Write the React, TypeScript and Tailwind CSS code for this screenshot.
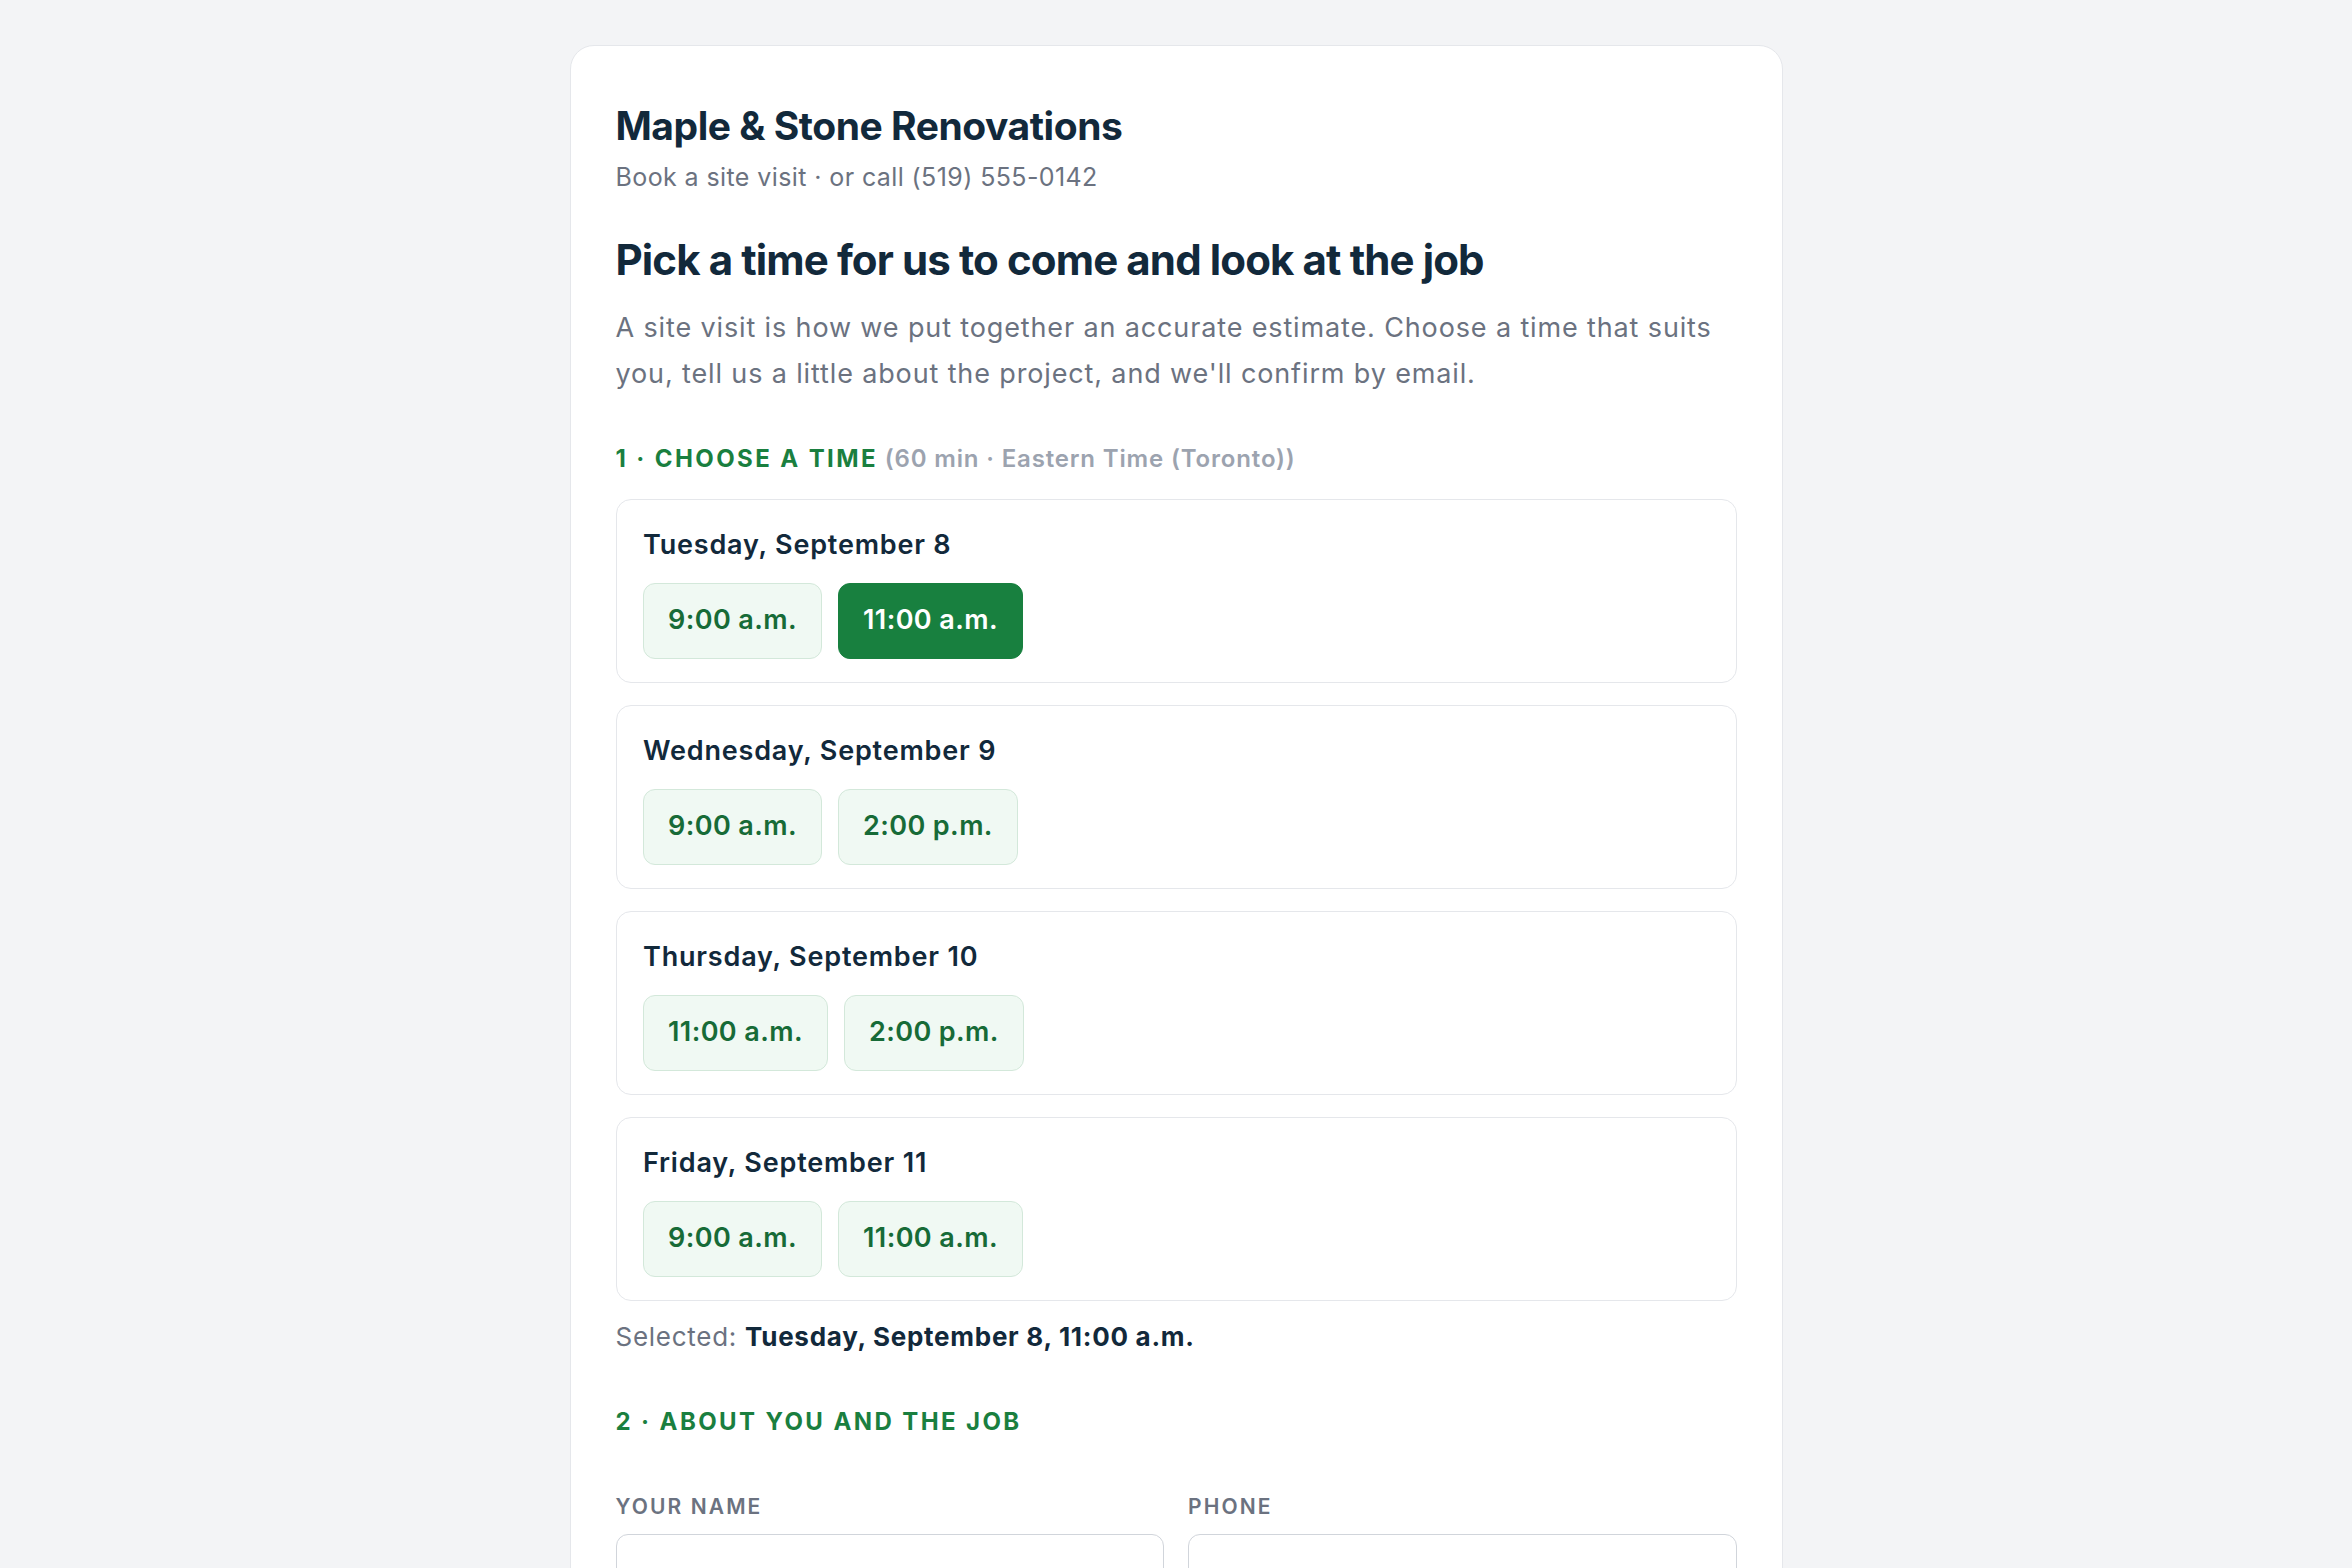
import React from "react";

const days = [
  { label: "Tuesday, September 8", times: ["9:00 a.m.", "11:00 a.m."], selected: 1 },
  { label: "Wednesday, September 9", times: ["9:00 a.m.", "2:00 p.m."], selected: -1 },
  { label: "Thursday, September 10", times: ["11:00 a.m.", "2:00 p.m."], selected: -1 },
  { label: "Friday, September 11", times: ["9:00 a.m.", "11:00 a.m."], selected: -1 },
];

export default function App() {
  return (
    <div
      className="min-h-screen bg-[#f3f4f6] pt-[45px]"
      style={{ fontFamily: "Inter, 'Noto Sans', sans-serif" }}
    >
      <div className="mx-auto w-[1213px] rounded-[24px] border-[1.5px] border-[#e5e7eb] bg-white px-[45px] pt-[56px] pb-[60px]">
        <h1 className="text-[39px] leading-[47px] font-bold tracking-[-0.012em] text-[#12293b]">
          Maple &amp; Stone Renovations
        </h1>
        <p className="mt-[10px] text-[25px] leading-[36px] tracking-[0.016em] text-[#6b7280]">
          Book a site visit · or call (519) 555-0142
        </p>
        <h2 className="mt-[40px] text-[42px] leading-[50px] font-bold tracking-[-0.021em] text-[#12293b]">
          Pick a time for us to come and look at the job
        </h2>
        <p className="mt-[20px] text-[27px] leading-[46px] tracking-[0.032em] text-[#6b7280]">
          A site visit is how we put together an accurate estimate. Choose a time that suits you, tell us a
          little about the project, and we'll confirm by email.
        </p>

        <div className="mt-[46px] text-[24px] leading-[32px]">
          <span className="font-bold uppercase tracking-[0.1em] text-[#1a7f3f]">1 · Choose a time</span>{" "}
          <span className="font-semibold tracking-[0.035em] text-[#9ca3af]">(60 min · Eastern Time (Toronto))</span>
        </div>

        <div className="mt-[24px] flex flex-col gap-[22px]">
          {days.map((d) => (
            <div
              key={d.label}
              className="rounded-[15px] border-[1.5px] border-[#e5e7eb] bg-white px-[26.5px] pt-[24.5px] pb-[23.5px]"
            >
              <div className="text-[27px] leading-[40px] font-semibold tracking-[0.03em] text-[#12293b]">
                {d.label}
              </div>
              <div className="mt-[18px] flex gap-[16px]">
                {d.times.map((t, i) =>
                  i === d.selected ? (
                    <button
                      key={t}
                      className="h-[76px] rounded-[12px] border-[1.5px] border-[#18803f] bg-[#18803f] px-[24px] text-[27px] font-semibold tracking-[0.015em] text-white"
                    >
                      {t}
                    </button>
                  ) : (
                    <button
                      key={t}
                      className="h-[76px] rounded-[12px] border-[1.5px] border-[#d3e8da] bg-[#f0f9f3] px-[24px] text-[27px] font-semibold tracking-[0.015em] text-[#176b37]"
                    >
                      {t}
                    </button>
                  )
                )}
              </div>
            </div>
          ))}
        </div>

        <p className="mt-[18px] text-[26px] leading-[36px] tracking-[0.028em] text-[#6b7280]">
          Selected: <span className="font-bold text-[#12293b]">Tuesday, September 8, 11:00 a.m.</span>
        </p>

        <div className="mt-[51px] text-[24px] leading-[32px] font-bold uppercase tracking-[0.1em] text-[#1a7f3f]">
          2 · About you and the job
        </div>

        <div className="mt-[54px] grid grid-cols-2 gap-x-[24px]">
          <div>
            <div className="text-[21px] leading-[30px] font-semibold uppercase tracking-[0.1em] text-[#6b7280]">
              Your name
            </div>
            <div className="mt-[12px] h-[72px] rounded-[12px] border-[1.5px] border-[#d1d5db] bg-white" />
          </div>
          <div>
            <div className="text-[21px] leading-[30px] font-semibold uppercase tracking-[0.1em] text-[#6b7280]">
              Phone
            </div>
            <div className="mt-[12px] h-[72px] rounded-[12px] border-[1.5px] border-[#d1d5db] bg-white" />
          </div>
        </div>
      </div>
    </div>
  );
}
